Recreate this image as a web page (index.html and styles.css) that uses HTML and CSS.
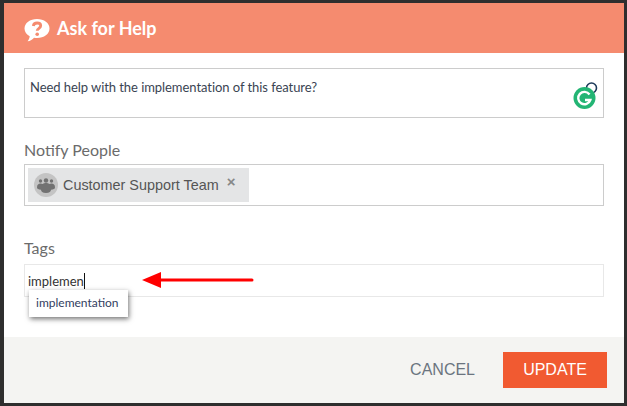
FILE: index.html
```html
<!DOCTYPE html>
<html lang="en">
<head>
    <meta charset="UTF-8">
    <meta name="viewport" content="width=device-width, initial-scale=1.0">
    <title>Ask for Help</title>
    <link rel="stylesheet" href="styles.css">
</head>
<body>
    <div class="modal">
        <div class="modal-header">
            <svg class="help-icon" width="28" height="24" viewBox="0 0 28 24">
                <path fill="#fff" d="M14 1c7 0 12.500 4 12.500 9.500S21 20 14 20c-1 0-2-.1-3-.3C9.500 21.500 7.500 23 4.500 23.300c1.200-1.300 2-3 2.200-5C3.500 16.500 1.500 13.700 1.500 10.500 1.500 5 7 1 14 1z"/>
                <path fill="none" stroke="#f58b6f" stroke-width="2.800" d="M10.300 8c.3-2 1.800-3 3.800-3s3.600 1.100 3.600 2.800c0 2.500-3.500 2.500-3.500 5"/>
                <circle fill="#f58b6f" cx="14.200" cy="16.300" r="1.800"/>
            </svg>
            <h2>Ask for Help</h2>
        </div>
        <div class="modal-body">
            <div class="question-box">
                Need help with the implementation of this feature?
                <svg class="grammarly" width="26" height="28" viewBox="0 0 26 28">
                    <circle fill="none" stroke="#1d3a5a" stroke-width="1.600" cx="18.500" cy="6" r="5"/>
                    <circle fill="#23b574" cx="11.500" cy="16" r="11"/>
                    <path fill="none" stroke="#fff" stroke-width="2.400" d="M16.500 12.500A6.200 6.200 0 1 0 17.300 18h-5.300"/>
                </svg>
            </div>

            <label class="field-label notify-label">Notify People</label>
            <div class="people-box">
                <div class="chip">
                    <span class="avatar">
                        <svg width="18" height="15" viewBox="0 0 18 15">
                            <circle fill="#727272" cx="9" cy="2.500" r="2.200"/>
                            <circle fill="#727272" cx="3.500" cy="3" r="1.700"/>
                            <circle fill="#727272" cx="14.500" cy="3" r="1.700"/>
                            <path fill="#727272" d="M0 9.500C0 6.500 1.500 5.500 3.500 5.500c1 0 1.800.2 2.300.6C6.500 5.300 7.700 5 9 5s2.500.3 3.200 1.100c.5-.4 1.300-.6 2.300-.6 2 0 3.500 1 3.500 4 0 1.500-1.500 2-4 2.300 0 1.700-1.500 3.200-5 3.200s-5-1.500-5-3.200C1.500 11.500 0 11 0 9.500z"/>
                        </svg>
                    </span>
                    <span class="chip-name">Customer Support Team</span>
                    <span class="chip-remove">×</span>
                </div>
            </div>

            <label class="field-label tags-label">Tags</label>
            <div class="tags-box">
                <span class="tags-text">implemen</span><span class="caret"></span>
                <div class="suggestions">implementation</div>
                <svg class="arrow" width="114" height="18" viewBox="0 0 114 18">
                    <path fill="#f00" d="M0 9 19 1v16z"/>
                    <path stroke="#f00" stroke-width="3" stroke-linecap="round" d="M18 9h92"/>
                </svg>
            </div>
        </div>
        <div class="modal-footer">
            <button class="btn-cancel">CANCEL</button>
            <button class="btn-update">UPDATE</button>
        </div>
    </div>
</body>
</html>
```

FILE: styles.css
```css
* {
    box-sizing: border-box;
    margin: 0;
    padding: 0;
}
html, body {
    height: 100%;
}
body {
    background: #2e2e2e;
    padding: 3px 3px 3px 4px;
    font-family: 'Lato', sans-serif;
    overflow: hidden;
}
.modal {
    background: white;
    height: 400px;
    display: flex;
    flex-direction: column;
}
.modal-header {
    height: 50px;
    background: #f58b6f;
    display: flex;
    align-items: center;
    padding-left: 19px;
    gap: 6px;
    flex-shrink: 0;
}
.modal-header h2 {
    color: white;
    font-size: 18px;
    font-weight: 700;
}
.help-icon {
    margin-top: 3px;
}
.modal-body {
    flex: 1;
    padding: 15px 20px 0;
}
.question-box {
    position: relative;
    height: 50px;
    border: 1px solid #ccc;
    padding: 9px 5px;
    font-size: 13px;
    letter-spacing: -0.06px;
    line-height: 18px;
    color: #3a4452;
}
.grammarly {
    position: absolute;
    right: 4px;
    bottom: 7px;
}
.field-label {
    display: block;
    font-size: 16px;
    line-height: 20px;
    color: #6b6b6b;
}
.notify-label {
    margin-top: 22px;
    margin-bottom: 4px;
}
.people-box {
    height: 42px;
    border: 1px solid #ccc;
    padding: 3px;
}
.chip {
    display: inline-flex;
    align-items: center;
    height: 34px;
    width: 221px;
    background: #e4e5e6;
    padding-left: 6px;
}
.avatar {
    width: 24px;
    height: 24px;
    border-radius: 50%;
    background: #c4c4c4;
    display: flex;
    align-items: center;
    justify-content: center;
    margin-right: 5px;
}
.chip-name {
    font-family: 'Liberation Sans', sans-serif;
    font-size: 14.4px;
    color: #555;
}
.chip-remove {
    font-family: 'Liberation Sans', sans-serif;
    font-size: 15px;
    font-weight: 700;
    color: #888;
    margin-left: 8px;
    margin-top: -8px;
}
.tags-label {
    margin-top: 32px;
    margin-bottom: 6px;
}
.tags-box {
    position: relative;
    display: flex;
    align-items: center;
    height: 33px;
    border: 1px solid #e8e8e8;
    padding-left: 3px;
    font-size: 13px;
    color: #333;
}
.caret {
    width: 1px;
    height: 16px;
    background: #111;
}
.suggestions {
    position: absolute;
    left: 4px;
    top: 25px;
    width: 99px;
    height: 27px;
    background: white;
    box-shadow: 1px 2px 5px rgba(0, 0, 0, 0.55);
    padding: 4px 7px;
    font-size: 12px;
    line-height: 17px;
    color: #33405f;
}
.arrow {
    position: absolute;
    left: 117px;
    top: 6px;
}
.modal-footer {
    height: 66px;
    background: #f4f4f2;
    display: flex;
    align-items: center;
    justify-content: flex-end;
    padding-right: 17px;
    flex-shrink: 0;
}
.modal-footer button {
    border: none;
    font-family: 'Liberation Sans', sans-serif;
    font-size: 16px;
    cursor: pointer;
}
.btn-cancel {
    background: transparent;
    color: #6b7480;
    margin-right: 28px;
}
.btn-update {
    width: 104px;
    height: 36px;
    background: #f15a31;
    color: white;
}
```
